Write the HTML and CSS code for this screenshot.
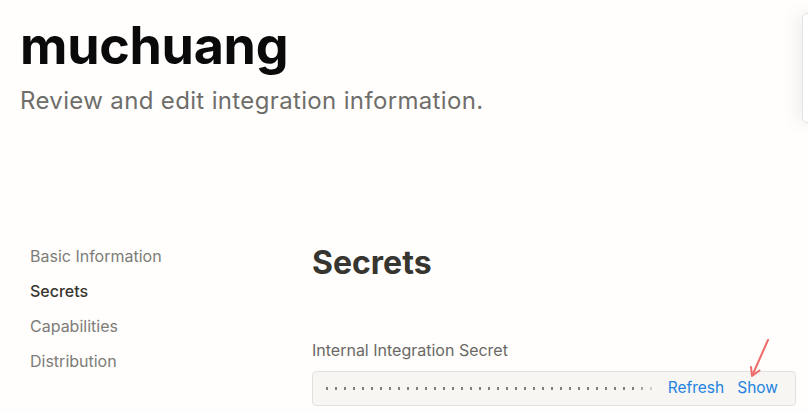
FILE: index.html
```html
<!DOCTYPE html>
<html>
<head>
<meta charset="utf-8">
<link rel="stylesheet" href="styles.css">
</head>
<body>
<div class="page">
  <header class="header">
    <h1 class="title">muchuang</h1>
    <p class="subtitle">Review and edit integration information.</p>
  </header>
  <div class="side-card"></div>
  <div class="main">
    <nav class="sidebar">
      <a class="nav-item">Basic Information</a>
      <a class="nav-item active">Secrets</a>
      <a class="nav-item">Capabilities</a>
      <a class="nav-item">Distribution</a>
    </nav>
    <section class="content">
      <h2 class="section-title">Secrets</h2>
      <div class="field-label">Internal Integration Secret</div>
      <div class="secret-box">
        <div class="dots"></div>
        <div class="actions">
          <span class="action">Refresh</span>
          <span class="action">Show</span>
        </div>
        <svg class="arrow" width="30" height="44" viewBox="0 0 30 44">
          <path d="M20 3 L4.5 38" stroke="#ee6b6b" stroke-width="2" stroke-linecap="round" fill="none"/>
          <path d="M3 30 L4 39 L11.5 33.5" stroke="#ee6b6b" stroke-width="2" stroke-linecap="round" stroke-linejoin="round" fill="none"/>
        </svg>
      </div>
    </section>
  </div>
</div>
</body>
</html>
```
FILE: styles.css
```css
html, body {
  margin: 0;
  padding: 0;
  background: #fffefc;
  font-family: Inter, "Noto Sans", sans-serif;
  overflow: hidden;
}
.page {
  position: relative;
  width: 808px;
  height: 412px;
}
.header {
  padding: 10px 0 0 20px;
}
.title {
  margin: 0;
  font-size: 52px;
  font-weight: 700;
  letter-spacing: -0.3px;
  line-height: 72px;
  color: #0a0a0a;
}
.subtitle {
  margin: 3px 0 0 0;
  font-size: 24px;
  line-height: 32px;
  color: #6f6e6b;
  letter-spacing: 0.35px;
}
.side-card {
  position: absolute;
  left: 802px;
  top: 13px;
  width: 40px;
  height: 108px;
  background: #fff;
  border: 1px solid #e3e2df;
  border-radius: 5px;
  box-shadow: -6px 0 18px rgba(0,0,0,0.06);
}
.main {
  display: flex;
  margin-top: 129px;
}
.sidebar {
  width: 312px;
  padding-left: 30px;
  box-sizing: border-box;
  display: flex;
  flex-direction: column;
  gap: 14px;
}
.nav-item {
  font-size: 16px;
  line-height: 21px;
  color: #7d7c78;
}
.nav-item.active {
  color: #37352f;
  font-weight: 500;
}
.content {
  flex: 1;
  padding-right: 12px;
}
.section-title {
  margin: -3px 0 0 0;
  font-size: 32px;
  line-height: 40px;
  font-weight: 700;
  color: #37352f;
}
.field-label {
  margin-top: 56px;
  font-size: 16px;
  line-height: 22px;
  color: #6a6965;
}
.secret-box {
  position: relative;
  box-sizing: border-box;
  margin-top: 10px;
  height: 35px;
  background: #f7f6f3;
  border: 1px solid #e2e1de;
  border-radius: 4px;
  display: flex;
  align-items: center;
  padding: 0 17px 0 13px;
}
.dots {
  width: 330px;
  height: 3px;
  background-image: linear-gradient(to right, #7e7d7a 2.5px, transparent 2.5px);
  background-size: 9px 3px;
  -webkit-mask-image: linear-gradient(to right, #000 93%, rgba(0,0,0,0.15) 100%);
  mask-image: linear-gradient(to right, #000 93%, rgba(0,0,0,0.15) 100%);
}
.actions {
  margin-left: auto;
  display: flex;
  gap: 13px;
  margin-top: -2px;
}
.action {
  font-size: 15.5px;
  color: #2383e2;
}
.arrow {
  position: absolute;
  left: 435px;
  top: -35px;
}
```
